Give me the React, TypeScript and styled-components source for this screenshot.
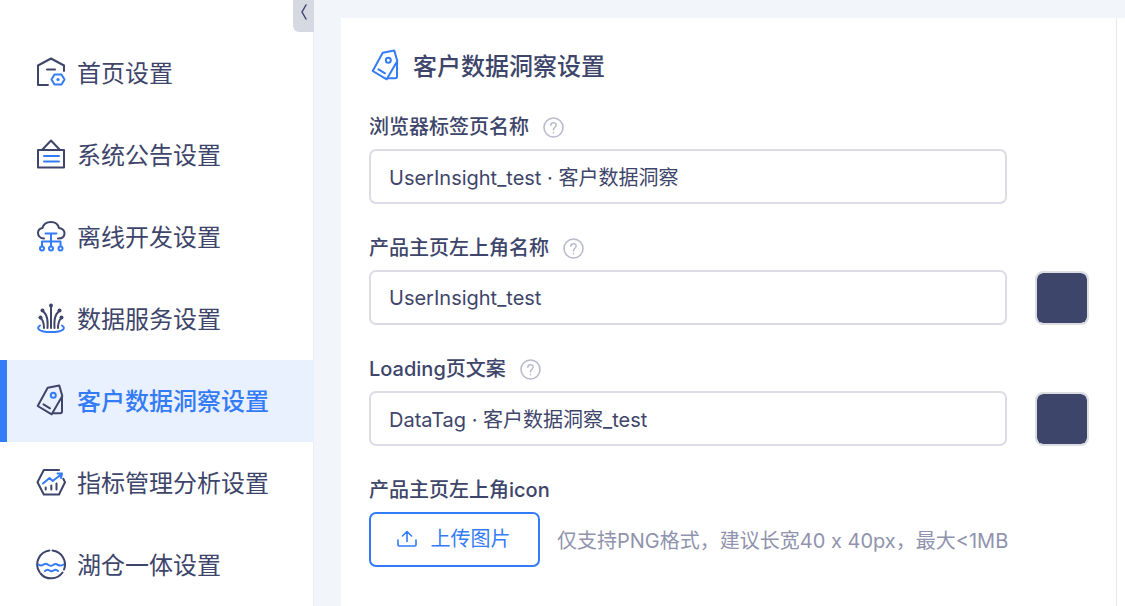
import React, { ReactNode, useState } from "react";
import styled, { createGlobalStyle } from "styled-components";

const ink = "#3e456b";
const blue = "#347bf8";
const line = "#dbdce6";

const GlobalStyle = createGlobalStyle`
  *, *::before, *::after { box-sizing: border-box; }
  body {
    margin: 0;
    background: #f2f6fa;
    color: ${ink};
    font-family: Inter, "Noto Sans CJK SC", sans-serif;
    font-size: 20px;
    line-height: 28px;
  }
  button, input { font: inherit; color: inherit; }
`;

const Page = styled.div`
  display: flex;
  min-height: 100vh;
`;

const Sidebar = styled.aside`
  position: relative;
  flex: 0 0 314px;
  padding-top: 32px;
  background: #fff;
  border-right: 1px solid #e9ecf1;
`;

const CollapseButton = styled.button`
  position: absolute;
  top: 0;
  right: -1px;
  display: flex;
  align-items: center;
  justify-content: center;
  width: 21px;
  height: 32px;
  padding: 0 0 8px;
  border: 0;
  border-radius: 0 0 0 6px;
  background: #d7d9e2;
`;

const NavLink = styled.a<{ $active?: boolean }>`
  display: flex;
  align-items: center;
  gap: 11px;
  height: 82px;
  padding: 2px 0 0 29px;
  border-left: 7px solid ${(p) => (p.$active ? blue : "transparent")};
  margin-right: -1px;
  background: ${(p) => (p.$active ? "#e9f0fe" : "transparent")};
  color: ${(p) => (p.$active ? blue : ink)};
  font-size: 24px;
  line-height: 32px;
  font-weight: ${(p) => (p.$active ? 500 : 400)};
  text-decoration: none;
  white-space: nowrap;
`;

const Main = styled.main`
  flex: 1;
  display: flex;
  min-width: 0;
  padding: 18px 0 0 27px;
`;

const Card = styled.section`
  flex: 1;
  min-width: 0;
  display: flex;
  padding-right: 8px;
  background: #fff;
`;

const CardBody = styled.div`
  flex: 1;
  min-width: 0;
  padding: 33px 27px 8px 28px;
  border-right: 1px solid #e6e7ee;
`;

const Title = styled.h1`
  display: flex;
  align-items: center;
  gap: 12px;
  margin: 0 0 30px;
  padding-left: 2px;
  font-size: 24px;
  line-height: 32px;
  height: 32px;
  font-weight: 500;
`;

const Field = styled.div`
  display: flex;
  flex-direction: column;
  gap: 8px;
  margin-bottom: 30px;
`;

const LabelRow = styled.div`
  display: flex;
  align-items: center;
  gap: 14px;
  height: 28px;
  font-weight: 500;
`;

const HelpButton = styled.button`
  display: flex;
  padding: 0;
  border: 0;
  background: none;
`;

const ControlRow = styled.div`
  display: flex;
  align-items: center;
  gap: 28px;
`;

const TextInput = styled.input`
  flex: 1;
  min-width: 0;
  height: 55px;
  padding: 0 18px;
  border: 2px solid ${line};
  border-radius: 7px;
  background: #fff;
  outline: 0;
`;

const SwatchSlot = styled.div`
  flex: 0 0 54px;
  height: 54px;
`;

const Swatch = styled.input`
  display: block;
  width: 54px;
  height: 54px;
  padding: 0;
  border: 2px solid #dcdde2;
  border-radius: 8px;
  background: none;
  overflow: hidden;
  appearance: none;
  &::-webkit-color-swatch-wrapper { padding: 0; }
  &::-webkit-color-swatch { border: 0; border-radius: 6px; }
`;

const UploadRow = styled.div`
  display: flex;
  align-items: center;
  gap: 17px;
`;

const UploadButton = styled.button`
  display: flex;
  align-items: center;
  justify-content: center;
  gap: 14px;
  width: 171px;
  height: 55px;
  padding: 0 2px 2px 0;
  border: 2px solid ${blue};
  border-radius: 7px;
  background: #fff;
  color: ${blue};
`;

const Hint = styled.span`
  padding-top: 2px;
  color: #9093ad;
  white-space: nowrap;
`;

const Glyph = styled.svg`
  display: block;
  flex: none;
  fill: none;
  stroke: currentColor;
  stroke-width: 2;
  stroke-linecap: round;
  stroke-linejoin: round;
`;

const LeadGlyph = styled(Glyph)`
  margin-bottom: 4px;
`;

const Icon = ({ children, color = ink }: { children: ReactNode; color?: string }) => (
  <LeadGlyph width="30" height="32" viewBox="0 0 30 32" color={color} aria-hidden="true">
    {children}
  </LeadGlyph>
);

const HomeIcon = () => (
  <Icon>
    <path d="M12 29H2V9.500L15 2.500L28 9.500V15M11 13.500H19" />
    <path stroke={blue} d="M18.500 18.500H25.500L28.500 23.500L25.500 28.500H18.500L15.500 23.500Z" />
    <circle cx="22" cy="23.500" r="1.600" fill={blue} stroke="none" />
  </Icon>
);

const NoticeIcon = () => (
  <Icon>
    <path d="M2 12H28V29.500H2ZM6 12L15 2.500L24 12" />
    <path stroke={blue} d="M8 18H23M8 23.500H23" />
  </Icon>
);

const CloudIcon = () => (
  <Icon>
    <path d="M8 18.500C4.500 18.500 2 16 2 13C2 10 4 8.500 6.500 8C7.500 4 11 2 15 2C19 2 22 4 23 8C26 8.500 28.500 10.500 28.500 13.500C28.500 16.500 26 18.500 22 18.500" />
    <path stroke={blue} d="M9.500 13.500H20.500M15 13.500V26.500M6 26.500V21.500H24.500V26.500" />
    <g stroke={blue} fill="#fff">
      <circle cx="6" cy="28.500" r="2" />
      <circle cx="15" cy="28.500" r="2" />
      <circle cx="24.500" cy="28.500" r="2" />
    </g>
  </Icon>
);

const ServiceIcon = () => (
  <Icon>
    <path stroke={blue} d="M4 23.500C0 26 2 30 15 30S30 26 26 23.500" />
    <path d="M15 26V4M11.500 26C12 17 11 13 7 9M18.500 26C18 17 19 13 23 9M8 26C8 21 7 18 4.500 16M22 26C22 21 23 18 25.500 16" />
    <g fill="currentColor" stroke="none">
      <circle cx="15" cy="3.500" r="2" />
      <circle cx="6.500" cy="8.500" r="2" />
      <circle cx="23.500" cy="8.500" r="2" />
      <circle cx="4.500" cy="15.500" r="2" />
      <circle cx="25.500" cy="15.500" r="2" />
    </g>
  </Icon>
);

const TagIcon = ({ color, dot = blue }: { color?: string; dot?: string }) => (
  <Icon color={color}>
    <path d="M11.700 3.700L23.300 1.600L26.300 12L15.700 30.300L1.700 22ZM7.500 20.300L14 24.300" />
    <path d="M26 13V27.500Q26 29.300 24.200 29.300H17" />
    <circle cx="17.300" cy="11.300" r="2.500" stroke={dot} />
  </Icon>
);

const MetricsIcon = () => (
  <Icon>
    <path d="M23 4H7.800L1.500 16.200L7.800 28.500H23L29 16.200L27.300 12.800M9.700 21.500V23.500M15.300 19.500V23.500M20.500 17.500V23.500" />
    <path stroke={blue} d="M7 17.500L13.500 12L16.700 15L25 8.500M21.500 7.500L26 7.500L25 12" />
  </Icon>
);

const LakeIcon = () => (
  <Icon>
    <path d="M13.500 2.500A14 14 0 0 0 3.500 24M16.500 2.500A14 14 0 0 1 28 21.500M4.500 25.500A14 14 0 0 0 26.500 24.500" />
    <path stroke={blue} d="M2.500 16.500C4.500 18 6 18 7.500 16.500C9 15.500 11 15.500 12.500 17C14 18 15.500 18 17 17C19 15.500 20.500 15.500 22 17C24 18 26 17.500 27.500 16.500M9 23C10.500 21.500 12 21.500 13.500 22.500C15 23.500 16 23.500 17.500 22.500C19 21.500 20.500 21.500 22 23" />
  </Icon>
);

const HelpIcon = () => (
  <Glyph width="21" height="21" viewBox="0 0 21 21" color="#b9bacb" aria-hidden="true">
    <circle cx="10.500" cy="10.500" r="9.500" strokeWidth="1.600" />
    <path strokeWidth="1.500" d="M7.800 8.200C7.900 4.800 13.200 4.800 13.200 8.100C13.200 10.200 10.500 10.300 10.500 12.700V13M10.500 15.600V15.800" />
  </Glyph>
);

const items = [
  { label: "首页设置", icon: <HomeIcon /> },
  { label: "系统公告设置", icon: <NoticeIcon /> },
  { label: "离线开发设置", icon: <CloudIcon /> },
  { label: "数据服务设置", icon: <ServiceIcon /> },
  { label: "客户数据洞察设置", icon: <TagIcon />, active: true },
  { label: "指标管理分析设置", icon: <MetricsIcon /> },
  { label: "湖仓一体设置", icon: <LakeIcon /> },
];

const fields = [
  { id: "tab-name", label: "浏览器标签页名称", value: "UserInsight_test · 客户数据洞察", swatch: false },
  { id: "home-name", label: "产品主页左上角名称", value: "UserInsight_test", swatch: true },
  { id: "loading-text", label: "Loading页文案", value: "DataTag · 客户数据洞察_test", swatch: true },
];

const SettingField = ({ id, label, value, swatch }: (typeof fields)[number]) => {
  const [text, setText] = useState(value);
  const [color, setColor] = useState(ink);
  return (
    <Field>
      <LabelRow>
        <label htmlFor={id}>{label}</label>
        <HelpButton type="button" aria-label={`${label}说明`}>
          <HelpIcon />
        </HelpButton>
      </LabelRow>
      <ControlRow>
        <TextInput id={id} value={text} onChange={(e) => setText(e.target.value)} />
        <SwatchSlot>
          {swatch && (
            <Swatch type="color" aria-label={`${label}颜色`} value={color} onChange={(e) => setColor(e.target.value)} />
          )}
        </SwatchSlot>
      </ControlRow>
    </Field>
  );
};

export default function App() {
  return (
    <>
      <GlobalStyle />
      <Page>
        <Sidebar>
          <CollapseButton type="button" aria-label="收起菜单">
            <Glyph width="8" height="16" viewBox="0 0 8 16" aria-hidden="true">
              <path strokeWidth="1.500" d="M6 1L2 8L6 15" />
            </Glyph>
          </CollapseButton>
          <nav>
            {items.map((item) => (
              <NavLink key={item.label} href="#" $active={item.active} aria-current={item.active ? "page" : undefined}>
                {item.icon}
                {item.label}
              </NavLink>
            ))}
          </nav>
        </Sidebar>
        <Main>
          <Card>
            <CardBody>
              <Title>
                <TagIcon color={blue} />
                客户数据洞察设置
              </Title>
              {fields.map((field) => (
                <SettingField key={field.id} {...field} />
              ))}
              <Field>
                <LabelRow id="upload-label">产品主页左上角icon</LabelRow>
                <UploadRow>
                  <UploadButton type="button" aria-describedby="upload-label upload-hint">
                    <Glyph width="20" height="20" viewBox="0 0 20 20" aria-hidden="true">
                      <path strokeWidth="1.600" d="M1 11V16Q1 17 2 17H18Q19 17 19 16V11M10 12.500V2.500M5.500 7L10 2.500L14.500 7" />
                    </Glyph>
                    上传图片
                  </UploadButton>
                  <Hint id="upload-hint">仅支持PNG格式，建议长宽40 x 40px，最大&lt;1MB</Hint>
                </UploadRow>
              </Field>
            </CardBody>
          </Card>
        </Main>
      </Page>
    </>
  );
}
